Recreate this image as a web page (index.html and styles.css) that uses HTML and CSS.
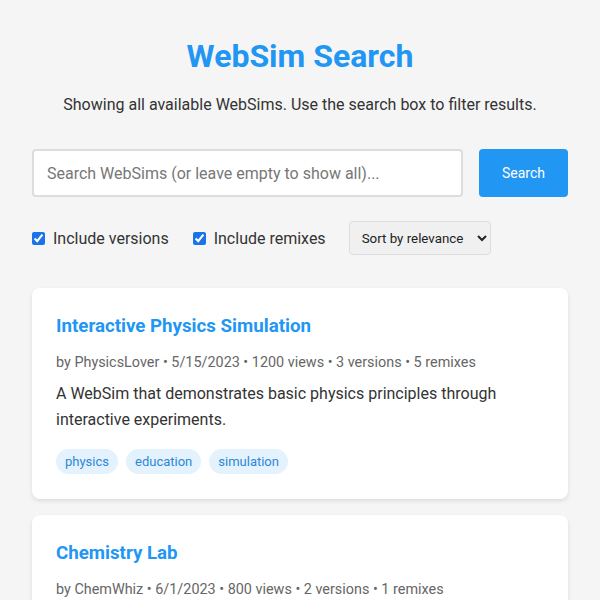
FILE: index.html
```html
<!DOCTYPE html>
<html lang="en">
<head>
<meta charset="utf-8">
<title>WebSim Search</title>
<link rel="stylesheet" href="styles.css">
</head>
<body>
<div class="container">
  <h1 class="title">WebSim Search</h1>
  <p class="subtitle">Showing all available WebSims. Use the search box to filter results.</p>
  <div class="search-row">
    <input class="search-input" type="text" placeholder="Search WebSims (or leave empty to show all)...">
    <button class="search-btn">Search</button>
  </div>
  <div class="filters">
    <label class="check"><input type="checkbox" checked> Include versions</label>
    <label class="check"><input type="checkbox" checked> Include remixes</label>
    <select class="sort">
      <option>Sort by relevance</option>
      <option>Sort by date</option>
      <option>Sort by views</option>
    </select>
  </div>
  <div class="results">
    <div class="card">
      <h3 class="card-title">Interactive Physics Simulation</h3>
      <div class="meta">by PhysicsLover • 5/15/2023 • 1200 views • 3 versions • 5 remixes</div>
      <p class="desc">A WebSim that demonstrates basic physics principles through interactive experiments.</p>
      <div class="tags">
        <span class="tag">physics</span>
        <span class="tag">education</span>
        <span class="tag">simulation</span>
      </div>
    </div>
    <div class="card">
      <h3 class="card-title">Chemistry Lab</h3>
      <div class="meta">by ChemWhiz • 6/1/2023 • 800 views • 2 versions • 1 remixes</div>
      <p class="desc">A virtual chemistry lab where you can mix compounds and observe reactions.</p>
      <div class="tags">
        <span class="tag">chemistry</span>
        <span class="tag">education</span>
        <span class="tag">lab</span>
      </div>
    </div>
  </div>
</div>
</body>
</html>
```

FILE: styles.css
```css
* { box-sizing: border-box; }
body {
  margin: 0;
  background: #f5f5f5;
  font-family: Roboto, "Liberation Sans", Arial, sans-serif;
  color: #333;
}
.container {
  max-width: 800px;
  margin: 0 auto;
  padding: 20px 32px;
}
.title {
  text-align: center;
  color: #2196f3;
  font-size: 32px;
  font-weight: 700;
  margin: 17px 0 0;
  line-height: 38px;
}
.subtitle {
  text-align: center;
  font-size: 16px;
  margin: 20px 0 0;
  line-height: 19px;
}
.search-row {
  display: flex;
  gap: 16px;
  margin-top: 35px;
}
.search-input {
  flex: 1;
  height: 48px;
  padding: 0 13px;
  font-size: 16px;
  font-family: inherit;
  border: 2px solid #ddd;
  border-radius: 4px;
  background: #fff;
  color: #333;
}
.search-input::placeholder { color: #777; }
.search-btn {
  width: 89px;
  height: 48px;
  background: #2196f3;
  color: #fff;
  border: none;
  border-radius: 4px;
  font-family: inherit;
  font-size: 14px;
}
.filters {
  display: flex;
  align-items: center;
  gap: 24px;
  margin-top: 24px;
  font-size: 16px;
}
.check {
  display: flex;
  align-items: center;
  gap: 8px;
}
.check input {
  margin: 0;
  width: 13px;
  height: 13px;
  accent-color: #1a73e8;
}
.sort {
  width: 142px;
  height: 34px;
  margin-left: -1px;
  padding: 0 8px;
  font-family: inherit;
  font-size: 13.33px;
  border: 1px solid #ddd;
  border-radius: 4px;
  background: #f0f0f0;
  color: #222;
}
.results {
  margin-top: 33px;
  display: flex;
  flex-direction: column;
  gap: 16px;
}
.card {
  background: #fff;
  border-radius: 8px;
  padding: 25px 24px 25px;
  box-shadow: 0 2px 4px rgba(0,0,0,0.1);
}
.card-title {
  margin: 0;
  color: #2196f3;
  font-size: 18.72px;
  font-weight: 700;
  line-height: 26px;
}
.meta {
  margin-top: 14px;
  font-size: 14.4px;
  color: #666;
  line-height: 20px;
}
.desc {
  margin: 8px 0 0;
  font-size: 16px;
  line-height: 26px;
  color: #333;
}
.tags {
  display: flex;
  flex-wrap: wrap;
  gap: 8px;
  margin-top: 16px;
}
.tag {
  background: #e3f2fd;
  color: #2b88d8;
  font-size: 13px;
  line-height: 17px;
  padding: 4px 9px;
  border-radius: 13px;
}
```
